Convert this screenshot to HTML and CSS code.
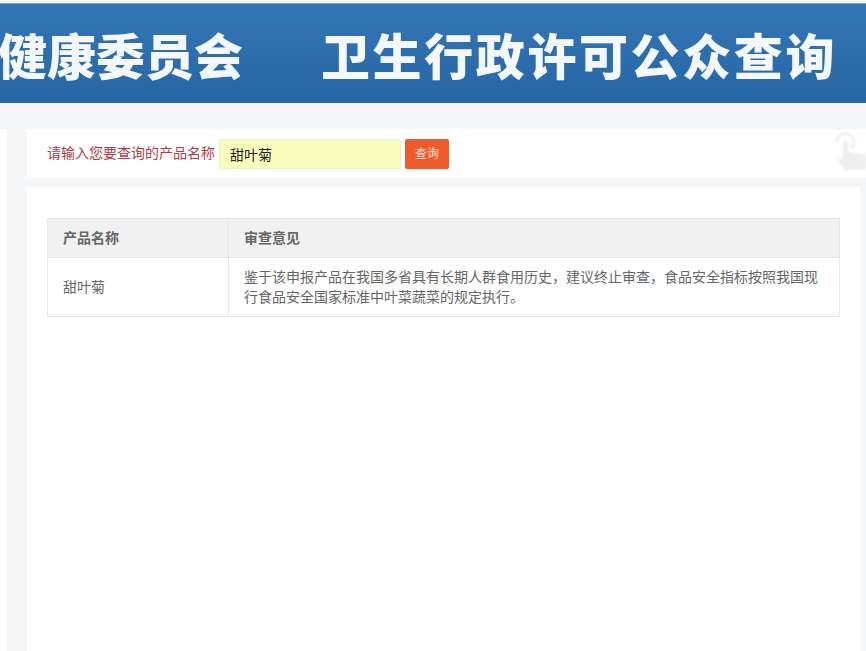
FILE: index.html
```html
<!DOCTYPE html>
<html lang="zh-CN">
<head>
<meta charset="utf-8">
<title>卫生行政许可公众查询</title>
<link rel="stylesheet" href="styles.css">
</head>
<body>
<header class="banner">
  <h1 class="banner-title"><span class="org">健康委员会</span><span class="sys">卫生行政许可公众查询</span></h1>
</header>
<div class="layout">
  <aside class="side"></aside>
  <main class="main">
    <form class="search">
      <label class="search-label">请输入您要查询的产品名称</label>
      <div class="search-input">甜叶菊</div>
      <div class="search-btn">查询</div>
      <svg class="hand" width="32" height="44" viewBox="0 0 32 44" aria-hidden="true">
        <path d="M3 12a8.500 8.500 0 0 1 17 0c0 3-1 5-3 6.500" fill="none" stroke="#f0f0f0" stroke-width="3"/>
        <path d="M9 13a2.500 2.500 0 0 1 5 0v9l18 3v15H11L4 30l2-2 3 3z" fill="#eeeeee"/>
      </svg>
    </form>
    <section class="panel">
      <table class="result">
        <thead>
          <tr><th class="col-name">产品名称</th><th>审查意见</th></tr>
        </thead>
        <tbody>
          <tr>
            <td>甜叶菊</td>
            <td>鉴于该申报产品在我国多省具有长期人群食用历史，建议终止审查，食品安全指标按照我国现行食品安全国家标准中叶菜蔬菜的规定执行。</td>
          </tr>
        </tbody>
      </table>
    </section>
  </main>
</div>
</body>
</html>
```
FILE: styles.css
```css
* { box-sizing: border-box; }
html, body { height: 100%; }
body {
  margin: 0;
  height: 651px;
  overflow: hidden;
  background: #f5f6f8;
  font-family: "Liberation Sans", "Noto Sans CJK SC", sans-serif;
  display: flex;
  flex-direction: column;
}
.banner {
  margin-top: 3px;
  height: 100px;
  flex: none;
  overflow: hidden;
  background: linear-gradient(180deg, #3276b6 0%, #2d6eae 50%, #2666a6 100%);
  border-top: 1px solid #6fa3cf;
}
.banner-title {
  margin: 0;
  height: 100%;
  display: flex;
  align-items: center;
  white-space: nowrap;
  color: #f4f8fb;
  font-family: "Noto Sans CJK SC", sans-serif;
  font-weight: 900;
  font-size: 49px;
  line-height: 50px;
}
.org { margin-left: -2px; letter-spacing: 0; }
.sys { margin-left: 78px; letter-spacing: 2.600px; }
.layout {
  flex: 1;
  display: flex;
  padding-top: 26px;
  min-height: 0;
}
.side {
  width: 7px;
  flex: none;
  background: #ffffff;
}
.main {
  flex: 1;
  margin-left: 20px;
  display: flex;
  flex-direction: column;
  gap: 9px;
  min-width: 0;
}
.search {
  position: relative;
  height: 49px;
  flex: none;
  background: #ffffff;
  display: flex;
  align-items: flex-start;
  padding: 10px 0 0 20px;
  overflow: hidden;
}
.search-label {
  font-size: 14px;
  line-height: 28px;
  color: #b23a48;
  margin-right: 4px;
}
.search-input {
  width: 182px;
  height: 30px;
  background: #f8fdbc;
  border: 1px solid #ecefd0;
  border-radius: 2px;
  padding-left: 10px;
  font-size: 14px;
  line-height: 31px;
  color: #222222;
}
.search-btn {
  width: 44px;
  height: 30px;
  margin-left: 4px;
  background: #ef5a2a;
  border-radius: 2px;
  color: #fde9dc;
  font-size: 12px;
  line-height: 30px;
  text-align: center;
}
.hand {
  position: absolute;
  right: 0;
  top: 1px;
  filter: blur(1px);
}
.panel {
  flex: 1;
  background: #ffffff;
  margin-right: 6px;
  padding: 31px 0 0 20px;
}
.result {
  width: 793px;
  border-collapse: collapse;
  table-layout: fixed;
  font-size: 14px;
  color: #666666;
}
.result th, .result td {
  border: 1px solid #e8e8e8;
  padding: 0 15px;
  text-align: left;
}
.result th {
  height: 39px;
  padding-bottom: 2px;
  background: #f1f1f1;
  font-weight: 700;
  color: #666666;
}
.result td {
  height: 59px;
  line-height: 20px;
}
.col-name { width: 181px; }
```
